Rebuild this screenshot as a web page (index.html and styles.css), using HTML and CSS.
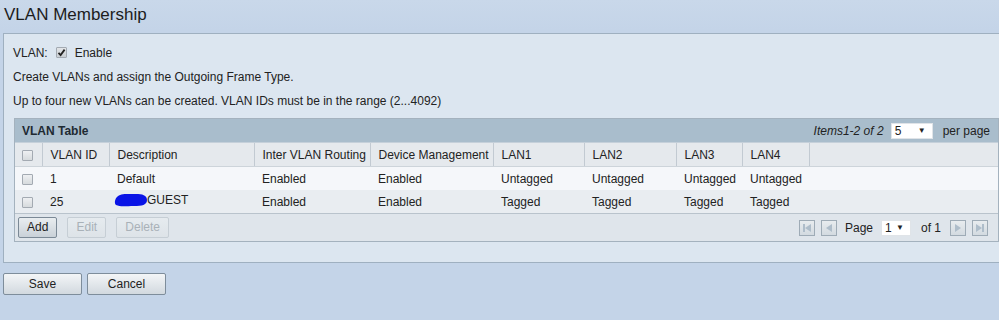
FILE: index.html
```html
<!DOCTYPE html>
<html>
<head>
<meta charset="utf-8">
<link rel="stylesheet" href="styles.css">
</head>
<body>
<div class="page">
  <h1 class="title">VLAN Membership</h1>
  <div class="panel">
    <div class="line line-first">VLAN: <span class="chk chk-on"><svg width="9" height="9" viewBox="0 0 9 9"><path d="M1.5 4.8 L3.6 7 L7.6 1.6" fill="none" stroke="#222" stroke-width="1.8"/></svg></span> Enable</div>
    <div class="line">Create VLANs and assign the Outgoing Frame Type.</div>
    <div class="line">Up to four new VLANs can be created. VLAN IDs must be in the range (2...4092)</div>
    <div class="tbl">
      <div class="tbl-head">
        <span class="tbl-title">VLAN Table</span>
        <span class="tbl-items"><i>Items1-2 of 2</i><span class="sel sel-pp">5<span class="arr">▼</span></span>per page</span>
      </div>
      <table class="grid">
        <colgroup>
          <col class="c0"><col class="c1"><col class="c2"><col class="c3"><col class="c4"><col class="c5"><col class="c6"><col class="c7"><col class="c8"><col>
        </colgroup>
        <thead>
          <tr><th><span class="chk"></span></th><th>VLAN ID</th><th>Description</th><th>Inter VLAN Routing</th><th>Device Management</th><th>LAN1</th><th>LAN2</th><th>LAN3</th><th>LAN4</th><th class="last"></th></tr>
        </thead>
        <tbody>
          <tr class="r1"><td><span class="chk"></span></td><td>1</td><td>Default</td><td>Enabled</td><td>Enabled</td><td>Untagged</td><td>Untagged</td><td>Untagged</td><td>Untagged</td><td></td></tr>
          <tr class="r2"><td><span class="chk"></span></td><td>25</td><td><span class="desc"><svg class="blob" width="34" height="16" viewBox="0 0 34 16"><path d="M3 5 C6 1 14 2 22 2 C28 2 33 3 33 8 C33 13 28 14 20 14 C12 14 6 15 2 13 C0 11 1 7 3 5 Z" fill="#0a14e6"/></svg>GUEST</span></td><td>Enabled</td><td>Enabled</td><td>Tagged</td><td>Tagged</td><td>Tagged</td><td>Tagged</td><td></td></tr>
        </tbody>
      </table>
      <div class="tbl-foot">
        <div class="btns">
          <span class="btn">Add</span>
          <span class="btn btn-dis">Edit</span>
          <span class="btn btn-dis">Delete</span>
        </div>
        <div class="pager">
          <span class="pbtn"><svg width="12" height="10" viewBox="0 0 12 10"><rect x="2" y="1" width="2" height="8" fill="#aebdca"/><path d="M10 1 L4 5 L10 9 Z" fill="#aebdca"/></svg></span>
          <span class="pbtn"><svg width="12" height="10" viewBox="0 0 12 10"><path d="M9 1 L3 5 L9 9 Z" fill="#aebdca"/></svg></span>
          <span class="plabel">Page</span>
          <span class="sel sel-pg">1<span class="arr">▼</span></span>
          <span class="plabel">of 1</span>
          <span class="pbtn"><svg width="12" height="10" viewBox="0 0 12 10"><path d="M3 1 L9 5 L3 9 Z" fill="#aebdca"/></svg></span>
          <span class="pbtn"><svg width="12" height="10" viewBox="0 0 12 10"><path d="M2 1 L8 5 L2 9 Z" fill="#aebdca"/><rect x="8" y="1" width="2" height="8" fill="#aebdca"/></svg></span>
        </div>
      </div>
    </div>
  </div>
  <div class="actions">
    <span class="abtn">Save</span>
    <span class="abtn">Cancel</span>
  </div>
</div>
</body>
</html>
```

FILE: styles.css
```css
html, body {
  margin: 0;
  padding: 0;
}
body {
  background: #c4d4e8;
  font-family: "Liberation Sans", Arial, sans-serif;
  font-size: 12px;
  color: #222;
  overflow: hidden;
  width: 999px;
  height: 320px;
}
.page {
  display: flex;
  flex-direction: column;
}
.title {
  margin: 0;
  padding: 5px 0 0 4px;
  height: 30px;
  box-sizing: border-box;
  font-size: 17px;
  font-weight: normal;
  color: #1c1c1c;
  background: linear-gradient(#c9d8ea, #c4d4e8);
}
.panel {
  margin-left: 3px;
  margin-right: -20px;
  margin-top: 3px;
  border: 1px solid #9fb0c0;
  background: #dce6f0;
  padding: 11px 0 20px 9px;
}
.line {
  height: 16px;
  line-height: 16px;
  margin-bottom: 8px;
}
.line-first {
  display: flex;
  align-items: center;
}
.chk {
  display: inline-block;
  box-sizing: border-box;
  width: 11px;
  height: 11px;
  border: 1px solid #a3aab2;
  border-radius: 1px;
  background: linear-gradient(#eef0f2, #d6dadd);
  vertical-align: middle;
  position: relative;
}
.chk-on {
  margin: 0 8px 0 8px;
  top: -1px;
  background: linear-gradient(#e2e5e8, #c9ced3);
}
.chk-on svg {
  position: absolute;
  left: 0;
  top: 0;
}
.tbl {
  width: 983px;
  margin-left: 1px;
  margin-top: 9px;
  border: 1px solid #a4b2be;
  background: #dfe5eb;
}
.tbl-head {
  height: 23px;
  background: #a9bdcc;
  display: flex;
  align-items: center;
  justify-content: space-between;
  padding: 0 8px 0 7px;
  border-bottom: 1px solid #c5d0da;
}
.tbl-title {
  font-weight: bold;
  color: #1e2a33;
}
.tbl-items {
  display: flex;
  align-items: center;
  color: #222;
}
.tbl-items i {
  margin-right: 7px;
}
.sel {
  display: inline-flex;
  align-items: center;
  justify-content: space-between;
  box-sizing: border-box;
  background: #fff;
  height: 16px;
  padding: 0 6px 0 3px;
  border: 1px solid #e0e4e8;
}
.sel-pp {
  width: 42px;
  margin-right: 10px;
}
.sel-pg {
  width: 30px;
  margin: 0 8px 0 8px;
}
.arr {
  font-size: 8px;
}
.grid {
  width: 100%;
  border-collapse: collapse;
  table-layout: fixed;
}
.c0 { width: 27px; }
.c1 { width: 67px; }
.c2 { width: 145px; }
.c3 { width: 116px; }
.c4 { width: 123px; }
.c5 { width: 91px; }
.c6 { width: 92px; }
.c7 { width: 66px; }
.c8 { width: 67px; }
.grid th {
  height: 23px;
  background: #e5e9ed;
  font-weight: normal;
  text-align: left;
  padding: 0 0 0 8px;
  border-right: 1px solid #c2cad2;
  border-bottom: 1px solid #cdd4da;
  white-space: nowrap;
  color: #222;
}
.grid th.last {
  border-right: none;
}
.grid td {
  height: 23px;
  padding: 0 0 0 8px;
  white-space: nowrap;
}
.grid th:first-child, .grid td:first-child {
  padding-left: 7px;
}
.r1 td {
  background: #f5f7fa;
}
.r2 td {
  background: #e9edf1;
  border-bottom: 1px solid #b9c3cc;
}
.desc {
  display: inline-flex;
  align-items: center;
  margin-left: -3px;
}
.blob {
  margin-right: -1px;
}
.tbl-foot {
  display: flex;
  justify-content: space-between;
  align-items: center;
  padding: 3px 10px 3px 3px;
  height: 21px;
}
.btns {
  display: flex;
  gap: 10px;
}
.btn {
  box-sizing: border-box;
  height: 21px;
  line-height: 19px;
  padding: 0 8px;
  min-width: 39px;
  text-align: center;
  border: 1px solid #7b8996;
  border-radius: 2px;
  background: linear-gradient(#e9edf0, #c9d1d8);
  color: #222;
}
.btn-dis {
  border-color: #c6ced5;
  background: linear-gradient(#e6ebef, #dde3e8);
  color: #a9b1b8;
}
.pager {
  display: flex;
  align-items: center;
}
.pbtn {
  box-sizing: border-box;
  width: 16px;
  height: 16px;
  border: 1px solid #9eabb6;
  background: linear-gradient(#e8ecef, #d3dae0);
  display: inline-flex;
  align-items: center;
  justify-content: center;
  margin-right: 6px;
}
.plabel {
  margin-left: 2px;
}
.pager .plabel + .pbtn {
  margin-left: 9px;
}
.pager .pbtn:last-child {
  margin-right: 0;
}
.actions {
  display: flex;
  gap: 5px;
  margin: 10px 0 0 3px;
}
.abtn {
  box-sizing: border-box;
  width: 79px;
  height: 22px;
  line-height: 20px;
  text-align: center;
  border: 1px solid #7e8d9b;
  border-radius: 2px;
  background: linear-gradient(#f3f5f7, #d2d9df);
  color: #222;
}
```
